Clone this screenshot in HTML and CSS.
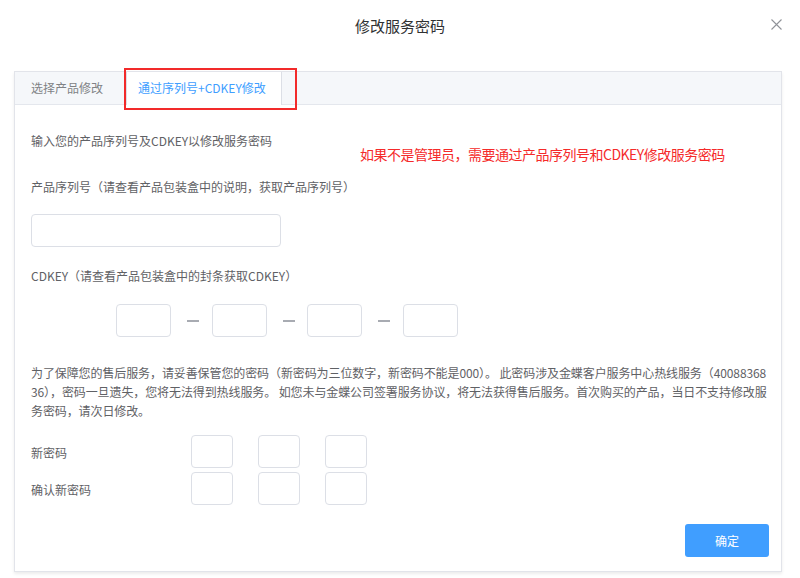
FILE: index.html
```html
<!DOCTYPE html>
<html lang="zh-CN">
<head>
<meta charset="utf-8">
<title>修改服务密码</title>
<link rel="stylesheet" href="styles.css">
</head>
<body>
<div class="dialog">
  <div class="dialog-header">
    <span class="dialog-title">修改服务密码</span>
    <button class="close" aria-label="关闭">
      <svg width="11" height="11" viewBox="0 0 11 11"><path d="M0.5 0.5 L10.5 10.5 M10.5 0.5 L0.5 10.5" stroke="#909399" stroke-width="1.1" fill="none"/></svg>
    </button>
  </div>
  <div class="panel">
    <div class="tabs">
      <div class="tab">选择产品修改</div>
      <div class="tab active">通过序列号+CDKEY修改<span class="mark"></span></div>
    </div>
    <div class="content">
      <div class="note">如果不是管理员，需要通过产品序列号和CDKEY修改服务密码</div>
      <div class="line intro">输入您的产品序列号及CDKEY以修改服务密码</div>
      <div class="line label-serial">产品序列号（请查看产品包装盒中的说明，获取产品序列号）</div>
      <input class="serial" type="text">
      <div class="line label-cdkey">CDKEY（请查看产品包装盒中的封条获取CDKEY）</div>
      <div class="cdkey-row">
        <input class="box cd" type="text"><span class="dash"></span>
        <input class="box cd" type="text"><span class="dash"></span>
        <input class="box cd" type="text"><span class="dash"></span>
        <input class="box cd" type="text">
      </div>
      <p class="desc">为了保障您的售后服务，请妥善保管您的密码（新密码为三位数字，新密码不能是000）。 此密码涉及金蝶客户服务中心热线服务（40088368<br>36），密码一旦遗失，您将无法得到热线服务。 如您未与金蝶公司签署服务协议，将无法获得售后服务。首次购买的产品，当日不支持修改服<br>务密码，请次日修改。</p>
      <div class="pw-rows">
        <div class="pw-row">
          <span class="pw-label">新密码</span>
          <div class="pw-boxes"><input class="box pw" type="password"><input class="box pw" type="password"><input class="box pw" type="password"></div>
        </div>
        <div class="pw-row">
          <span class="pw-label">确认新密码</span>
          <div class="pw-boxes"><input class="box pw" type="password"><input class="box pw" type="password"><input class="box pw" type="password"></div>
        </div>
      </div>
      <div class="actions"><button class="confirm">确定</button></div>
    </div>
  </div>
</div>
</body>
</html>
```

FILE: styles.css
```css
* { box-sizing: border-box; }
html, body {
  margin: 0;
  padding: 0;
  background: #fff;
  font-family: "Noto Sans CJK SC", "Microsoft YaHei", sans-serif;
  color: #5f6165;
}
.dialog {
  width: 800px;
  height: 578px;
  position: relative;
}
.dialog-header {
  height: 71px;
  display: flex;
  justify-content: center;
  padding-top: 15px;
  position: relative;
}
.dialog-title {
  font-size: 15px;
  line-height: 22px;
  color: #303133;
}
.close {
  position: absolute;
  right: 18px;
  top: 19px;
  border: 0;
  background: none;
  padding: 0;
  width: 11px;
  height: 11px;
  display: flex;
}
.panel {
  margin: 0 18px 0 14px;
  border: 1px solid #e2e4ea;
  box-shadow: 0 2px 3px rgba(0,0,0,0.08);
  height: 501px;
  display: flex;
  flex-direction: column;
}
.tabs {
  height: 33px;
  background: #f5f7fa;
  border-bottom: 1px solid #e4e7ed;
  display: flex;
  flex-shrink: 0;
}
.tab {
  font-size: 12px;
  line-height: 32px;
  padding: 0 21px 0 16px;
  color: #808285;
}
.tab.active {
  position: relative;
  background: #fff;
  color: #409eff;
  border-left: 1px solid #dcdfe6;
  border-right: 1px solid #dcdfe6;
  height: 33px;
  padding: 0 15px 0 11px;
  margin-left: 2px;
}
.mark {
  position: absolute;
  left: -3px;
  top: -4px;
  width: 173px;
  height: 42px;
  border: 2px solid #f22a2a;
  pointer-events: none;
}
.content {
  position: relative;
  padding: 26px 12px 13px 16px;
  display: flex;
  flex-direction: column;
  align-items: flex-start;
  flex: 1;
}
.note {
  position: absolute;
  left: 345px;
  top: 39px;
  font-size: 14px;
  line-height: 20px;
  letter-spacing: -0.5px;
  color: #f52a2a;
}
.line {
  font-size: 12px;
  line-height: 20px;
}
.label-serial { margin-top: 26px; }
.serial {
  margin-top: 17px;
  width: 250px;
  height: 33px;
  border: 1px solid #dcdfe6;
  border-radius: 4px;
  outline: none;
}
.label-cdkey { margin-top: 19px; }
.cdkey-row {
  margin-top: 18px;
  margin-left: 85px;
  display: flex;
  align-items: center;
}
.box {
  border: 1px solid #dcdfe6;
  border-radius: 4px;
  height: 33px;
  padding: 0;
  outline: none;
  background: #fff;
}
.cd { width: 55px; }
.dash {
  width: 12px;
  height: 2px;
  background: #a8abb2;
  margin: 0 12.5px 0 16px;
}
.desc {
  margin: 26px 0 0 0;
  font-size: 12px;
  line-height: 19px;
  white-space: nowrap;
  letter-spacing: -0.1px;
}
.pw-rows {
  margin-top: 15px;
  display: flex;
  flex-direction: column;
  gap: 4px;
}
.pw-row {
  display: flex;
  align-items: center;
}
.pw-label {
  width: 160px;
  font-size: 12px;
  line-height: 20px;
  padding-top: 3px;
}
.pw-boxes {
  display: flex;
  gap: 25px;
}
.pw { width: 42px; }
.actions {
  margin-top: 19px;
  align-self: stretch;
  display: flex;
  justify-content: flex-end;
}
.confirm {
  width: 84px;
  height: 33px;
  border: 0;
  border-radius: 3px;
  background: #409eff;
  color: #fff;
  font-family: inherit;
  font-size: 12px;
}
```
